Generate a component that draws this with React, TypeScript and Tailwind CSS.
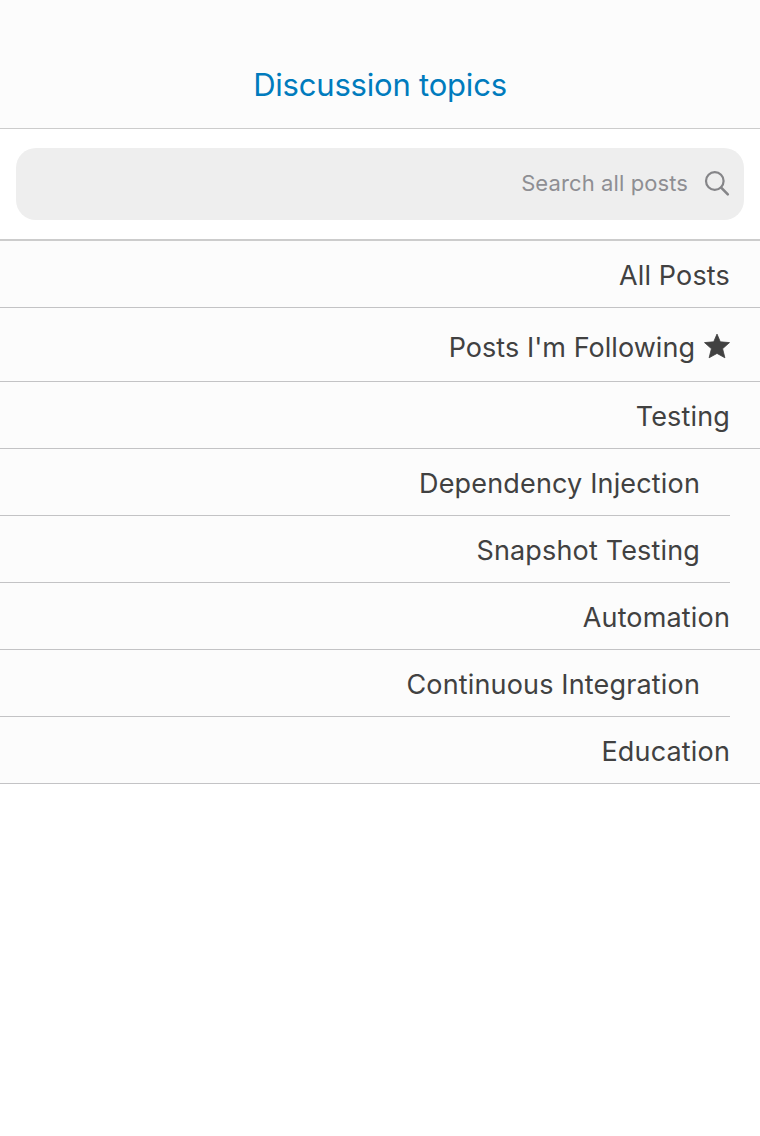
type Topic = { title: string; indented?: boolean; starred?: boolean };

const topics: Topic[] = [
  { title: "All Posts" },
  { title: "Posts I'm Following", starred: true },
  { title: "Testing" },
  { title: "Dependency Injection", indented: true },
  { title: "Snapshot Testing", indented: true },
  { title: "Automation" },
  { title: "Continuous Integration", indented: true },
  { title: "Education" },
];

function SearchIcon() {
  return (
    <svg className="h-7 w-7" viewBox="0 0 28 28" fill="none" stroke="#858588">
      <circle cx="11.8" cy="11" r="8.8" strokeWidth="2.2" />
      <path d="M18.2 17.6L24.8 24.3" strokeWidth="2.6" strokeLinecap="round" />
    </svg>
  );
}

function StarIcon() {
  return (
    <svg className="h-[26px] w-[26px]" viewBox="0 0 26 26" fill="#414141" stroke="#414141" strokeWidth="0.8" strokeLinejoin="round">
      <path d="M13 1.1L16.3 8.8L25.5 9.6L18.6 15.7L20.9 24.8L13 20.4L5.1 24.8L7.4 15.7L0.5 9.6L9.7 8.8Z" />
    </svg>
  );
}

export default function App() {
  return (
    <div className="flex h-[1136px] w-[760px] flex-col bg-white font-['Inter',sans-serif]">
      <header className="flex h-[129px] items-end justify-center border-b border-[#cccccc] bg-[#fcfcfc] pb-[23px]">
        <h1 className="text-[31px] leading-10 tracking-[-0.2px] text-[#007bbd]">Discussion topics</h1>
      </header>
      <div className="h-[112px] border-b-2 border-[#cccccc] px-4 pt-[19px]">
        <div className="flex h-[72px] items-center justify-end gap-[15px] rounded-[20px] bg-[#eeeeee] pr-[13px]">
          <span className="pb-0.5 text-[22px] tracking-[0.1px] text-[#8e8e93]">Search all posts</span>
          <SearchIcon />
        </div>
      </div>
      <ul>
        {topics.map((t) => (
          <li key={t.title} className={t.indented ? "bg-[#fcfcfc] pr-[30px]" : "bg-[#fcfcfc]"}>
            <div
              className={`flex items-center justify-end gap-[9px] border-b border-[#c3c3c5] pt-[3px] pr-[30px] ${t.starred ? "h-[74px]" : "h-[67px]"}`}
            >
              <span
                className={`text-[27px] text-[#414141] ${t.starred ? "pt-1 tracking-[0.04px]" : "pt-0.5 tracking-[0.16px]"}`}
              >
                {t.title}
              </span>
              {t.starred && <StarIcon />}
            </div>
          </li>
        ))}
      </ul>
    </div>
  );
}
